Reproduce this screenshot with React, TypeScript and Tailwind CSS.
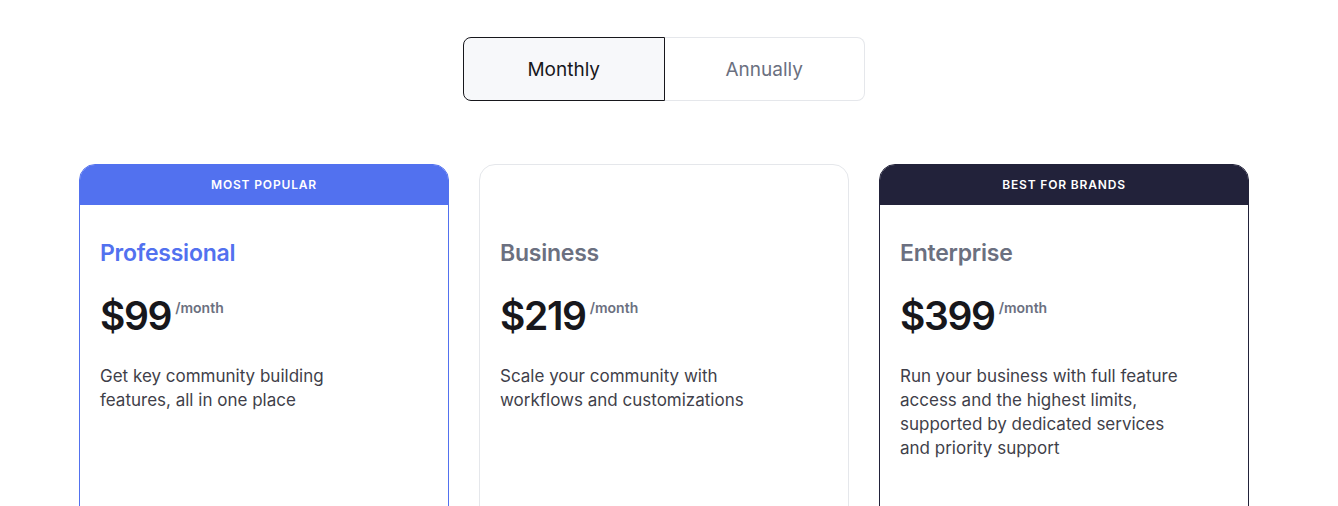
import { useState } from 'react';

type Plan = {
  id: string;
  name: string;
  price: string;
  description: string;
  badge?: string;
  tone: 'blue' | 'plain' | 'dark';
};

const plans: Plan[] = [
  {
    id: 'pro',
    name: 'Professional',
    price: '$99',
    description: 'Get key community building features, all in one place',
    badge: 'MOST POPULAR',
    tone: 'blue',
  },
  {
    id: 'business',
    name: 'Business',
    price: '$219',
    description: 'Scale your community with workflows and customizations',
    tone: 'plain',
  },
  {
    id: 'enterprise',
    name: 'Enterprise',
    price: '$399',
    description:
      'Run your business with full feature access and the highest limits, supported by dedicated services and priority support',
    badge: 'BEST FOR BRANDS',
    tone: 'dark',
  },
];

function PlanCard({ plan }: { plan: Plan }) {
  const border =
    plan.tone === 'blue'
      ? 'border-[#5271ef]'
      : plan.tone === 'dark'
        ? 'border-[#22223a]'
        : 'border-gray-200';
  const badgeBg = plan.tone === 'blue' ? 'bg-[#5271ef]' : 'bg-[#22223a]';

  return (
    <div className={`w-[370px] h-[400px] rounded-[16px] border bg-white overflow-hidden ${border}`}>
      {plan.badge ? (
        <div
          className={`h-[40px] flex items-center justify-center text-white text-[12px] font-semibold tracking-[0.07em] ${badgeBg}`}
        >
          {plan.badge}
        </div>
      ) : (
        <div className="h-[40px]" />
      )}
      <div className="px-[20px] pt-[33px]">
        <h3
          className={`text-[23px] leading-[30px] font-semibold tracking-[-0.01em] ${
            plan.tone === 'blue' ? 'text-[#5271ef]' : 'text-[#6b7080]'
          }`}
        >
          {plan.name}
        </h3>
        <div className="mt-[24px] flex items-start gap-[4px]">
          <span className="text-[39px] leading-[48px] font-semibold text-[#17171c] tracking-[-0.035em]">
            {plan.price}
          </span>
          <span className="text-[14px] leading-[20px] font-semibold text-[#6b7080] mt-[6px]">/month</span>
        </div>
        <p className="mt-[24px] max-w-[285px] text-[17px] leading-[24px] text-[#3f3f4a]">{plan.description}</p>
      </div>
    </div>
  );
}

export default function App() {
  const [period, setPeriod] = useState<'monthly' | 'annually'>('monthly');

  return (
    <div
      className="w-[1328px] h-[506px] overflow-hidden bg-white"
      style={{ fontFamily: '"Inter", "Noto Sans", sans-serif' }}
    >
      <div className="pt-[37px] flex justify-center">
        <div className="flex w-[402px] h-[64px]">
          <button
            onClick={() => setPeriod('monthly')}
            className={`flex-1 pt-[2px] rounded-l-[8px] border text-[19px] ${
              period === 'monthly'
                ? 'bg-[#f7f8fa] border-[#17171c] text-[#17171c]'
                : 'bg-white border-gray-200 border-r-0 text-[#6b7080]'
            }`}
          >
            Monthly
          </button>
          <button
            onClick={() => setPeriod('annually')}
            className={`flex-1 pt-[2px] rounded-r-[8px] border text-[19px] ${
              period === 'annually'
                ? 'bg-[#f7f8fa] border-[#17171c] text-[#17171c]'
                : 'bg-white border-gray-200 border-l-0 text-[#6b7080]'
            }`}
          >
            Annually
          </button>
        </div>
      </div>

      <div className="mt-[63px] flex justify-center gap-[30px]">
        {plans.map((plan) => (
          <PlanCard key={plan.id} plan={plan} />
        ))}
      </div>
    </div>
  );
}
